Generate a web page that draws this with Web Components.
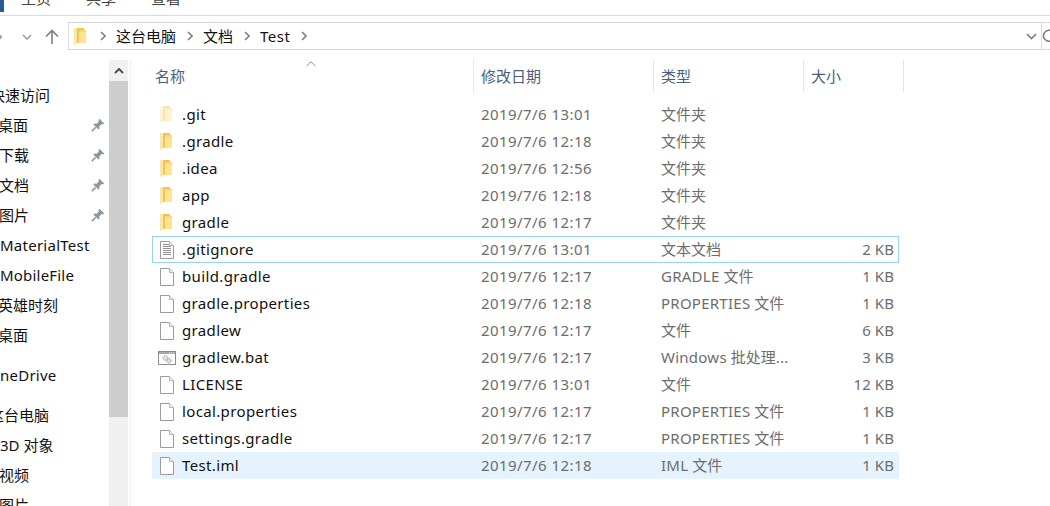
<!doctype html>
<html lang="zh">
<head>
<meta charset="utf-8">
<title>Test</title>
<style>
	html, body { margin: 0; height: 100%; overflow: hidden; background: #fff; }
	body {
		font: 15px/20px "Noto Sans", "Noto Sans CJK SC", sans-serif;
		color: #000;
		}
</style>
</head>
<body>
<explorer-window></explorer-window>

<script>
const FOLDER = `<svg width="12" height="17" viewBox="0 0 12 17">
	<path d="M0 0 H9.5 L10.5 2 H12 V15 H0 Z" fill="#f0c25a"/>
	<path d="M4 2 H12 V15 H4 Z" fill="#fcd976"/>
	<path d="M5 4 H12 V15 H5 Z" fill="#ffe391"/>
	<path d="M0 0 H3.5 V14.2 L.6 17 H0 Z" fill="#ffe79e"/>
	<path d="M3.5 1 H4.4 V14.6 H3.5 Z" fill="#e2ad45"/>
	</svg>`

const FILE = `<svg width="14" height="18" viewBox="0 0 14 18">
	<path d="M.5 .5 H9.5 L13.5 4.5 V17.5 H.5 Z" fill="#fff" stroke="#9b9b9b"/>
	<path d="M9.5 .5 V4.5 H13.5" fill="#f2f2f2" stroke="#b4b4b4"/>
	</svg>`

const TEXT_FILE = `<svg width="14" height="18" viewBox="0 0 14 18">
	<path d="M.5 .5 H9.5 L13.5 4.5 V17.5 H.5 Z" fill="#fff" stroke="#9b9b9b"/>
	<path d="M9.5 .5 V4.5 H13.5" fill="#f2f2f2" stroke="#b4b4b4"/>
	<path d="M3 3.5 H9 M3 5.5 H11 M3 7.5 H11 M3 9.5 H11 M3 11.5 H11 M3 13.5 H11" stroke="#929292"/>
	</svg>`

const BAT_FILE = `<svg width="18" height="14" viewBox="0 0 18 14" style="margin-left:-2px">
	<rect x=".5" y=".5" width="17" height="13" fill="#fff" stroke="#8c8c8c"/>
	<rect x="1" y="1" width="16" height="2" fill="#a8a8a8"/>
	<path d="M11 2 H12 M13 2 H14 M15 2 H16" stroke="#eee"/>
	<circle cx="7.5" cy="7" r="2.4" fill="#e4e4e4" stroke="#999" stroke-dasharray="1.4 .7"/>
	<circle cx="11" cy="9.8" r="2.1" fill="#cfe3f5" stroke="#6f9fcc" stroke-dasharray="1.4 .7"/>
	</svg>`

const ICONS = { folder: FOLDER, file: FILE, text: TEXT_FILE, bat: BAT_FILE }

const PIN = `<svg width="14" height="14" viewBox="0 0 14 14">
	<path d="M8.5 .8 L13.2 5.5 L11.8 6.6 L10.6 6.1 L8.3 8.4 L8.5 10.8 L7.4 11.6 L2.4 6.6 L3.2 5.5 L5.6 5.7 L7.9 3.4 L7.4 2.2 Z" fill="#8b969f"/>
	<path d="M4.6 9.4 L.8 13.2" stroke="#8b969f" stroke-width="1.6"/>
	</svg>`

// latin runs are set a bit wider, Noto Sans is narrower than the original font
const latin = ( text, spacing ) => text.replace( /[\x21-\x7e]+/g, run => `<span style="letter-spacing:${ spacing }px">${ run }</span>` )


class RibbonTabs extends HTMLElement {
	constructor() {
		super()
		this.attachShadow({ mode: "open" }).innerHTML = `<style>
				:host {
					display: flex;
					height: 15px;
					box-sizing: content-box;
					border-bottom: 1px solid #dadada;
					overflow: hidden;
					}
				#file { width: 4px; height: 12px; background: #2b5a8f; flex: none; }
				#tabs {
					display: flex; gap: 35px;
					margin: -12px 0 0 17px;
					color: #444;
					}
				</style>
			<div id=file></div>
			<div id=tabs><span>主页</span><span>共享</span><span>查看</span></div>`
		}
	static { customElements.define( "ribbon-tabs", this ) }
	}


class AddressBar extends HTMLElement {
	constructor() {
		super()
		let sep = `<svg class=sep width="6" height="10" viewBox="0 0 6 10"><path d="M1 1 L5 5 L1 9" fill="none" stroke="#808080" stroke-width="1.6"/></svg>`
		this.attachShadow({ mode: "open" }).innerHTML = `<style>
				:host {
					display: flex; align-items: center;
					height: 39px;
					}
				#nav { width: 68px; flex: none; display: flex; align-items: center; height: 28px; margin-top: 2px; }
				#nav svg { flex: none; display: block; }
				#box {
					flex: 1; box-sizing: border-box;
					height: 28px; margin-top: 1px;
					display: flex; align-items: center;
					border: 1px solid #d9d9d9; border-width: 1px 0 1px 1px;
					padding-left: 5px;
					}
				#folder { display: block; margin-right: 14px; flex: none; }
				#folder svg { display: block; }
				.sep { flex: none; margin-right: 10px; }
				#crumbs { display: flex; align-items: center; flex: 1; min-width: 0; color: #111; }
				#crumbs span { margin-right: 11px; padding-bottom: 1px; }
				#crumbs span span { margin: 0; padding: 0; }
				#end {
					flex: none; width: 8px; height: 100%;
					border-left: 1px solid #d9d9d9;
					overflow: hidden;
					margin-left: 4px;
					}
				</style>
			<div id=nav>
				<svg style="margin-left:-4px" width="7" height="10" viewBox="0 0 7 10"><path d="M1 1 L5 5 L1 9" fill="none" stroke="#9a9a9a" stroke-width="2"/></svg>
				<svg style="margin-left:19px" width="10" height="6" viewBox="0 0 10 6"><path d="M1 1 L5 5 L9 1" fill="none" stroke="#9a9a9a" stroke-width="1.5"/></svg>
				<svg style="margin-left:13px" width="14" height="15" viewBox="0 0 14 15"><path d="M7 15 V2 M1 7.5 L7 1.5 L13 7.5" fill="none" stroke="#7f7f7f" stroke-width="1.6"/></svg>
			</div>
			<div id=box>
				<span id=folder>${ FOLDER }</span>
				${ sep }
				<div id=crumbs>
					<span>这台电脑</span>${ sep }<span>文档</span>${ sep }<span>${ latin( "Test", .5 ) }</span>${ sep }
				</div>
				<svg width="11" height="7" viewBox="0 0 11 7"><path d="M1 1 L5.5 5.5 L10 1" fill="none" stroke="#7f7f7f" stroke-width="1.7"/></svg>
				<div id=end>
					<svg style="display:block;margin:6px 0 0 0" width="14" height="14" viewBox="0 0 14 14"><path d="M11 3 A5.5 5.5 0 1 0 12.5 7" fill="none" stroke="#777" stroke-width="1.5"/></svg>
				</div>
			</div>`
		}
	static { customElements.define( "address-bar", this ) }
	}


class NavItem extends HTMLElement {
	constructor() {
		super()
		let pinned = this.hasAttribute( "pinned" )
		this.attachShadow({ mode: "open" }).innerHTML = `<style>
				:host {
					display: flex; align-items: center; justify-content: space-between;
					height: 30px;
					white-space: nowrap;
					color: #111;
					}
				:host([gap]) { margin-top: 10px; }
				#text { padding-bottom: 1px; }
				svg { display: block; margin-right: 4px; flex: none; }
				</style>
			<span id=text style="margin-left:${ this.getAttribute( "indent" ) || 0 }px"><slot></slot></span>
			${ pinned ? PIN : "" }`
		}
	static { customElements.define( "nav-item", this ) }
	}


class NavPane extends HTMLElement {
	constructor() {
		super()
		this.attachShadow({ mode: "open" }).innerHTML = `<style>
				:host {
					display: flex; flex: none;
					width: 130px; height: 100%;
					border-right: 1px solid #f0f0f0;
					overflow: hidden;
					}
				#items { width: 109px; padding-top: 20px; flex: none; overflow: hidden; }
				#bar {
					width: 19px; flex: none;
					background: #f0f0f0;
					display: flex; flex-direction: column;
					}
				#up { height: 21px; display: grid; place-content: center; }
				#up svg { display: block; }
				#thumb { height: 336px; background: #cdcdcd; }
				</style>
			<div id=items><slot></slot></div>
			<div id=bar>
				<div id=up><svg width="10" height="6" viewBox="0 0 10 6"><path d="M1 5 L5 1 L9 5" fill="none" stroke="#505050" stroke-width="2"/></svg></div>
				<div id=thumb></div>
			</div>`
		}
	static { customElements.define( "nav-pane", this ) }
	}


class FileRow extends HTMLElement {
	constructor() {
		super()
		let icon = this.getAttribute( "icon" ) || "file"
		this.attachShadow({ mode: "open" }).innerHTML = `<style>
				:host {
					display: grid;
					grid-template-columns: 30px 299px 180px 150px 83px;
					align-items: center;
					height: 27px; width: 747px;
					box-sizing: border-box;
					white-space: nowrap;
					color: #6d6d6d;
					}
				:host([focused]) { outline: 1px solid #99d1ff; outline-offset: -1px; }
				:host([selected]) { background: #e5f3ff; }
				#icon { display: flex; padding-left: 8px; }
				#icon svg { display: block; flex: none; }
				:host([faded]) #icon svg { opacity: .45; }
				#name { color: #111; letter-spacing: .36px; }
				#size { text-align: right; }
				.t { padding-bottom: 2px; }
				</style>
			<span id=icon>${ ICONS[ icon ] }</span>
			<span id=name class=t><slot></slot></span>
			<span class=t style="letter-spacing:.43px">${ this.getAttribute( "date" ) }</span>
			<span class=t>${ latin( this.getAttribute( "kind" ), .25 ) }</span>
			<span id=size class=t>${ latin( this.getAttribute( "size" ) || "", .1 ) }</span>`
		}
	static { customElements.define( "file-row", this ) }
	}


class FileList extends HTMLElement {
	constructor() {
		super()
		this.attachShadow({ mode: "open" }).innerHTML = `<style>
				:host {
					display: block; flex: 1; min-width: 0;
					padding-left: 21px;
					}
				#head {
					display: grid;
					grid-template-columns: 322px 180px 150px 100px;
					height: 32px;
					color: #4c607a;
					}
				#head span {
					display: flex; align-items: center;
					padding-left: 3px;
					box-sizing: border-box;
					border-right: 1px solid #e5e5e5;
					position: relative;
					}
				#head span + span { padding-left: 7px; }
				#caret { position: absolute; left: 154px; top: 1px; display: block; }
				#rows { margin-top: 9px; }
				</style>
			<div id=head>
				<span>名称<svg id=caret width="10" height="6" viewBox="0 0 10 6"><path d="M.5 5 L5 .8 L9.5 5" fill="none" stroke="#909090"/></svg></span>
				<span>修改日期</span>
				<span>类型</span>
				<span>大小</span>
			</div>
			<div id=rows><slot></slot></div>`
		}
	static { customElements.define( "file-list", this ) }
	}


class ExplorerWindow extends HTMLElement {
	constructor() {
		super()
		let nav = [
			[ "快速访问", -10 ],
			[ "桌面", -2, 1 ], [ "下载", -1, 1 ], [ "文档", -1, 1 ], [ "图片", -1, 1 ],
			[ latin( "MaterialTest", .25 ) ], [ latin( "MobileFile", .2 ) ], [ "英雄时刻", -2 ], [ "桌面", -2 ],
			[ latin( "OneDrive", .25 ), -12, 0, 1 ],
			[ "这台电脑", -11, 0, 1 ],
			[ "3D 对象", 0 ], [ "视频", -1 ], [ "图片", -1 ],
			]
		let files = [
			[ ".git", "2019/7/6 13:01", "文件夹", "", "folder", "faded" ],
			[ ".gradle", "2019/7/6 12:18", "文件夹", "", "folder" ],
			[ ".idea", "2019/7/6 12:56", "文件夹", "", "folder" ],
			[ "app", "2019/7/6 12:18", "文件夹", "", "folder" ],
			[ "gradle", "2019/7/6 12:17", "文件夹", "", "folder" ],
			[ ".gitignore", "2019/7/6 13:01", "文本文档", "2 KB", "text", "focused" ],
			[ "build.gradle", "2019/7/6 12:17", "GRADLE 文件", "1 KB" ],
			[ "gradle.properties", "2019/7/6 12:18", "PROPERTIES 文件", "1 KB" ],
			[ "gradlew", "2019/7/6 12:17", "文件", "6 KB" ],
			[ "gradlew.bat", "2019/7/6 12:17", "Windows 批处理...", "3 KB", "bat" ],
			[ "LICENSE", "2019/7/6 13:01", "文件", "12 KB" ],
			[ "local.properties", "2019/7/6 12:17", "PROPERTIES 文件", "1 KB" ],
			[ "settings.gradle", "2019/7/6 12:17", "PROPERTIES 文件", "1 KB" ],
			[ "Test.iml", "2019/7/6 12:18", "IML 文件", "1 KB", "file", "selected" ],
			]
		this.attachShadow({ mode: "open" }).innerHTML = `<style>
				:host {
					display: flex; flex-direction: column;
					width: 1050px; height: 506px;
					overflow: hidden;
					}
				#body { display: flex; flex: 1; min-height: 0; padding-top: 5px; overflow: hidden; }
				</style>
			<ribbon-tabs></ribbon-tabs>
			<address-bar></address-bar>
			<div id=body>
				<nav-pane>
					${ nav.map( ([ text, indent, pinned, gap ]) => `<nav-item indent="${ indent || 0 }" ${ pinned ? "pinned" : "" } ${ gap ? "gap" : "" }>${ text }</nav-item>` ).join( "" ) }
				</nav-pane>
				<file-list>
					${ files.map( ([ name, date, kind, size, icon, flag ]) => `<file-row date="${ date }" kind="${ kind }" size="${ size }" icon="${ icon || "file" }" ${ flag || "" }>${ name }</file-row>` ).join( "" ) }
				</file-list>
			</div>`
		}
	static { customElements.define( "explorer-window", this ) }
	}
</script>
</body>
</html>
